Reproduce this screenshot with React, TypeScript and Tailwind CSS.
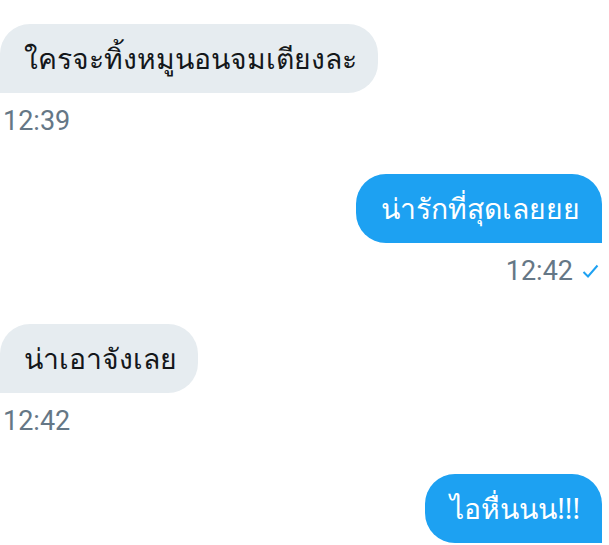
const font = { fontFamily: '"Noto Sans", Roboto, sans-serif' };

function Received({ text, time }: { text: string; time: string }) {
  return (
    <div className="flex flex-col items-start">
      <div className="h-[69px] flex items-center pl-[24px] pr-[21px] bg-[#e6ecf0] text-[#14171a] rounded-tl-[30px] rounded-tr-[30px] rounded-br-[30px] text-[28.3px]">
        {text}
      </div>
      <div className="mt-[13px] pl-[3px] text-[27px] leading-[30px] text-[#657786] font-['Roboto']">{time}</div>
    </div>
  );
}

function Sent({ text, time }: { text: string; time: string }) {
  return (
    <div className="flex flex-col items-end">
      <div className="h-[69px] flex items-center pl-[25px] pr-[22px] bg-[#1da1f2] text-white rounded-tl-[30px] rounded-tr-[30px] rounded-bl-[30px] text-[28.3px]">
        {text}
      </div>
      {time && (
        <div className="mt-[13px] h-[30px] flex items-center gap-[9px] text-[27px] leading-[30px] text-[#657786] font-['Roboto']">
          {time}
          <svg width="17" height="15" viewBox="0 0 17 15" className="mr-[3px]">
            <polyline points="1.5,8 6,12.5 15.5,1.5" fill="none" stroke="#1da1f2" strokeWidth="2" />
          </svg>
        </div>
      )}
    </div>
  );
}

export default function App() {
  return (
    <div className="w-[609px] h-[545px] bg-white overflow-hidden pt-[24px] pr-[7px] flex flex-col gap-[38px]" style={font}>
      <Received text="ใครจะทิ้งหมูนอนจมเตียงละ" time="12:39" />
      <Sent text="น่ารักที่สุดเลยยย" time="12:42" />
      <Received text="น่าเอาจังเลย" time="12:42" />
      <Sent text="ไอหื่นนน!!!" time="" />
    </div>
  );
}
